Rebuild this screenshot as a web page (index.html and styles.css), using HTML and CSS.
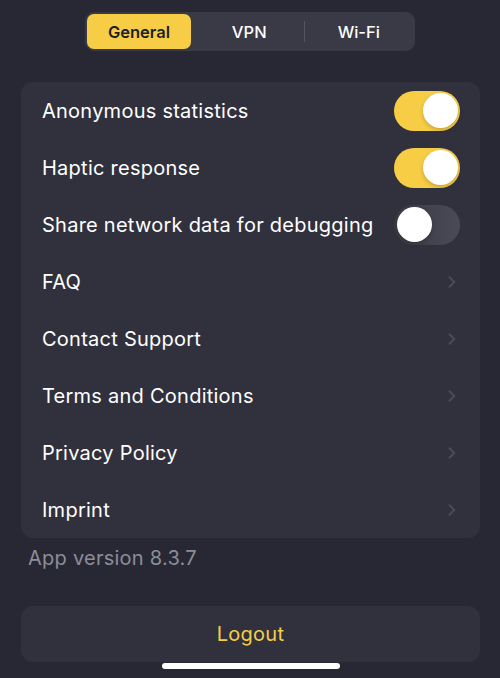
FILE: index.html
```html
<!DOCTYPE html>
<html>
<head>
<meta charset="utf-8">
<link rel="stylesheet" href="styles.css">
</head>
<body>
<div class="screen">
  <div class="seg">
    <div class="seg-item active">General</div>
    <div class="seg-item">VPN</div>
    <div class="seg-sep"></div>
    <div class="seg-item">Wi-Fi</div>
  </div>

  <div class="card">
    <div class="row"><span class="label">Anonymous statistics</span><span class="toggle on"><span class="knob"></span></span></div>
    <div class="row"><span class="label">Haptic response</span><span class="toggle on"><span class="knob"></span></span></div>
    <div class="row"><span class="label">Share network data for debugging</span><span class="toggle"><span class="knob"></span></span></div>
    <div class="row"><span class="label">FAQ</span><svg class="chev" viewBox="0 0 8 12" width="8" height="12"><path d="M1.5 1.2 L6.3 6 L1.5 10.8" fill="none" stroke="#4b4b59" stroke-width="2" stroke-linecap="round" stroke-linejoin="round"/></svg></div>
    <div class="row"><span class="label">Contact Support</span><svg class="chev" viewBox="0 0 8 12" width="8" height="12"><path d="M1.5 1.2 L6.3 6 L1.5 10.8" fill="none" stroke="#4b4b59" stroke-width="2" stroke-linecap="round" stroke-linejoin="round"/></svg></div>
    <div class="row"><span class="label">Terms and Conditions</span><svg class="chev" viewBox="0 0 8 12" width="8" height="12"><path d="M1.5 1.2 L6.3 6 L1.5 10.8" fill="none" stroke="#4b4b59" stroke-width="2" stroke-linecap="round" stroke-linejoin="round"/></svg></div>
    <div class="row"><span class="label">Privacy Policy</span><svg class="chev" viewBox="0 0 8 12" width="8" height="12"><path d="M1.5 1.2 L6.3 6 L1.5 10.8" fill="none" stroke="#4b4b59" stroke-width="2" stroke-linecap="round" stroke-linejoin="round"/></svg></div>
    <div class="row"><span class="label">Imprint</span><svg class="chev" viewBox="0 0 8 12" width="8" height="12"><path d="M1.5 1.2 L6.3 6 L1.5 10.8" fill="none" stroke="#4b4b59" stroke-width="2" stroke-linecap="round" stroke-linejoin="round"/></svg></div>
  </div>

  <div class="version">App version 8.3.7</div>

  <div class="logout">Logout</div>
  <div class="home"></div>
</div>
</body>
</html>
```

FILE: styles.css
```css
html, body {
  margin: 0;
  padding: 0;
  background: #272834;
}
body {
  font-family: Inter, "Noto Sans", sans-serif;
  color: #ffffff;
  width: 500px;
  height: 678px;
  overflow: hidden;
}
.screen {
  position: relative;
  width: 500px;
  height: 678px;
  display: flex;
  flex-direction: column;
  align-items: stretch;
}
.seg {
  align-self: center;
  margin-top: 12px;
  width: 330px;
  height: 39px;
  box-sizing: border-box;
  padding: 2px;
  background: #3a3a47;
  border-radius: 9px;
  display: flex;
  align-items: center;
}
.seg-item {
  flex: 1;
  height: 35px;
  display: flex;
  align-items: center;
  justify-content: center;
  font-size: 16.5px;
  font-weight: 500;
  color: #ffffff;
  border-radius: 7px;
}
.seg-item.active {
  flex: 0 0 104px;
  background: #f7cd46;
  color: #1e1f2b;
  font-weight: 600;
  margin-right: 4px;
}
.seg-sep {
  width: 1px;
  height: 21px;
  background: #55555f;
}
.card {
  margin: 31px 20px 0 21px;
  background: #31313e;
  border-radius: 12px;
  display: flex;
  flex-direction: column;
}
.row {
  height: 57px;
  display: flex;
  align-items: center;
  justify-content: space-between;
  padding: 0 20px 0 21px;
  font-size: 20px;
  letter-spacing: 0.25px;
}
.chev {
  margin-right: 4px;
}
.toggle {
  width: 66px;
  height: 40px;
  border-radius: 20px;
  background: linear-gradient(90deg, #3a3a46, #4a4a57);
  position: relative;
  flex: 0 0 auto;
}
.toggle.on {
  background: #f7cd46;
}
.knob {
  position: absolute;
  top: 2.5px;
  left: 2.5px;
  width: 35px;
  height: 35px;
  border-radius: 50%;
  background: #ffffff;
  box-shadow: 0 2px 4px rgba(0,0,0,0.2);
}
.toggle.on .knob {
  left: 28.5px;
}
.version {
  margin: 8px 0 0 28px;
  font-size: 20px;
  color: #8d8d98;
  letter-spacing: 0.25px;
}
.logout {
  margin: 36px 20px 0 21px;
  height: 56px;
  background: #31313e;
  border-radius: 12px;
  display: flex;
  align-items: center;
  justify-content: center;
  color: #f7cd46;
  font-size: 20px;
  letter-spacing: 0.25px;
}
.home {
  position: absolute;
  left: 162px;
  top: 663px;
  width: 178px;
  height: 6px;
  border-radius: 3px;
  background: #ffffff;
}
```
